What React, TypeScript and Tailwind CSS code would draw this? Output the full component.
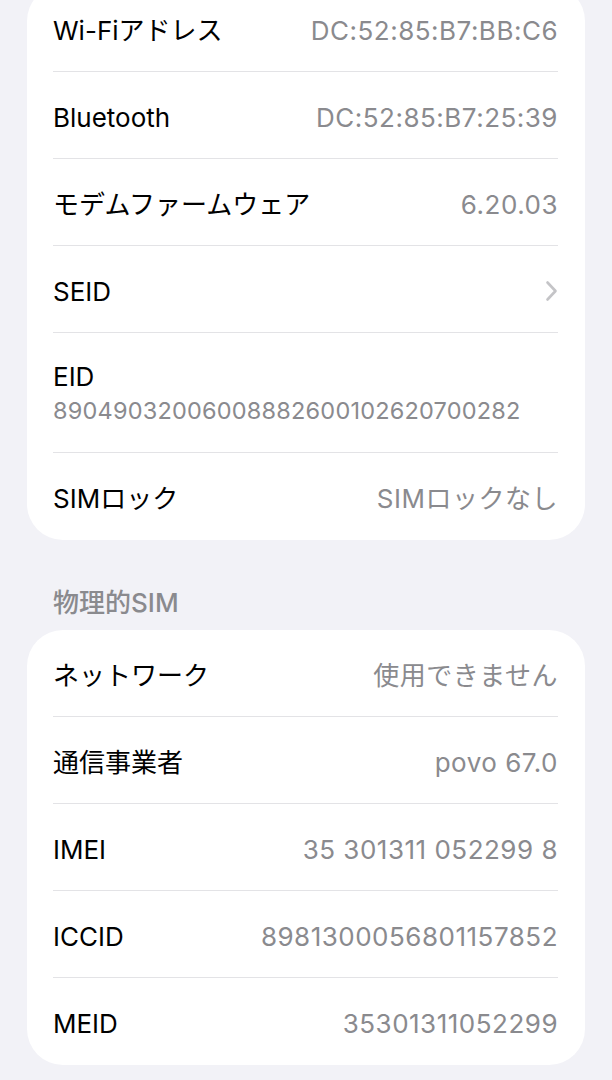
const font = "font-['Inter','Noto_Sans_CJK_JP',sans-serif]";

type Row = { label: string; value?: string; chevron?: boolean; sub?: string };

const simInfo: Row[] = [
  { label: "Wi-Fiアドレス", value: "DC:52:85:B7:BB:C6" },
  { label: "Bluetooth", value: "DC:52:85:B7:25:39" },
  { label: "モデムファームウェア", value: "6.20.03" },
  { label: "SEID", chevron: true },
  { label: "EID", sub: "89049032006008882600102620700282" },
  { label: "SIMロック", value: "SIMロックなし" },
];

const physical: Row[] = [
  { label: "ネットワーク", value: "使用できません" },
  { label: "通信事業者", value: "povo 67.0" },
  { label: "IMEI", value: "35 301311 052299 8" },
  { label: "ICCID", value: "8981300056801157852" },
  { label: "MEID", value: "35301311052299" },
];

function Chevron() {
  return (
    <svg width="13" height="22" viewBox="0 0 13 22" fill="none" stroke="#c4c4c7" strokeWidth="2.6">
      <path d="M2.5 2.5l8 8.5-8 8.5" strokeLinecap="round" strokeLinejoin="round" />
    </svg>
  );
}

function Card({ rows, className }: { rows: Row[]; className?: string }) {
  return (
    <div className={`bg-white rounded-[36px] pl-[26px] pr-[27px] pb-px ${className ?? ""}`}>
      {rows.map((row, i) => {
        const last = i === rows.length - 1;
        return (
          <div key={row.label} className={last ? "" : "border-b border-[#e3e3e6]"}>
            {row.sub ? (
              <div className="h-[119px] flex flex-col justify-center pt-[2px]">
                <div className="text-[26px] leading-[35px] text-black">{row.label}</div>
                <div className="text-[23.5px] leading-[34px] text-[#8a8a8e] tracking-[0.2px]">{row.sub}</div>
              </div>
            ) : (
              <div className="h-[86px] flex items-center justify-between pt-[4px]">
                <span className="text-[26px] text-black">{row.label}</span>
                {row.chevron ? (
                  <Chevron />
                ) : (
                  <span className="text-[26px] text-[#8a8a8e] tracking-[0.5px]">{row.value}</span>
                )}
              </div>
            )}
          </div>
        );
      })}
    </div>
  );
}

export default function App() {
  return (
    <div className={`${font} bg-[#f2f2f7] min-h-screen px-[27px] overflow-hidden`}>
      <Card rows={simInfo} className="-mt-[15px]" />
      <div className="pl-[26px] pt-[48px] pb-[12px] text-[26px] leading-[30px] font-medium text-[#8a8a8e]">物理的SIM</div>
      <Card rows={physical} />
    </div>
  );
}
